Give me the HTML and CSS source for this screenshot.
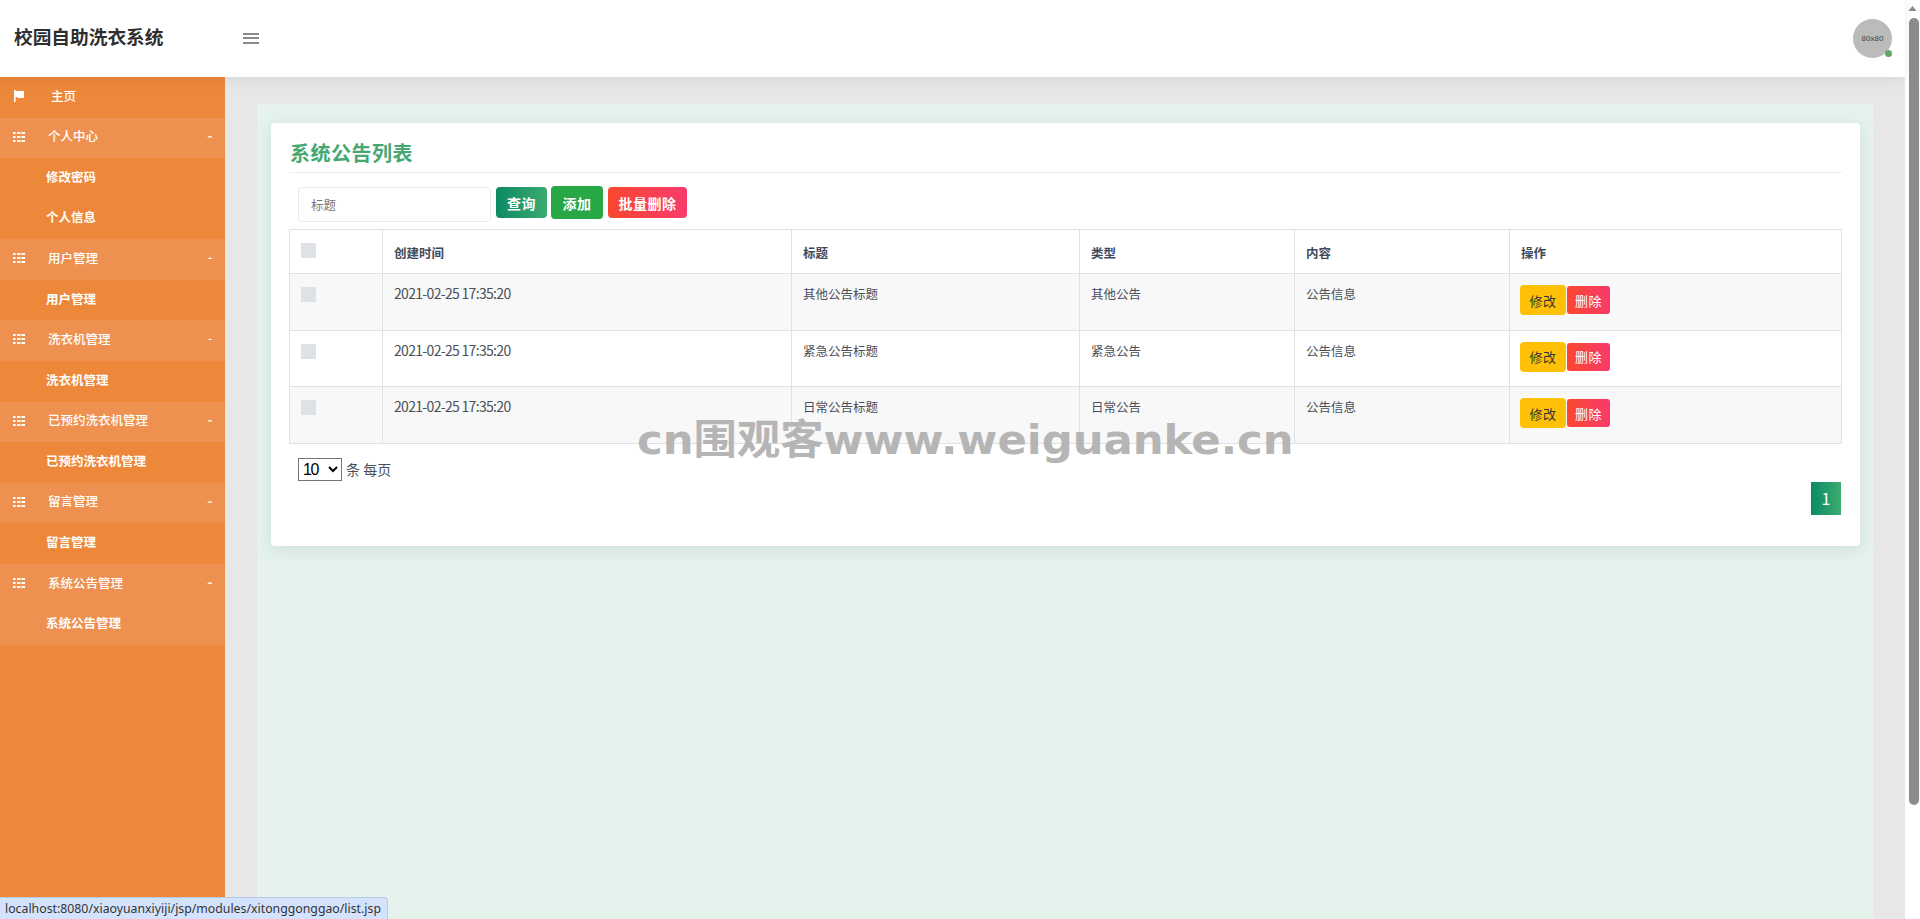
FILE: index.html
```html
<!DOCTYPE html>
<html lang="zh-CN">
<head>
<meta charset="utf-8">
<title>校园自助洗衣系统</title>
<link rel="stylesheet" href="styles.css">
</head>
<body>
<div class="page">
  <header class="topbar">
    <div class="brand">校园自助洗衣系统</div>
    <button class="burger" aria-label="menu"><span></span><span></span><span></span></button>
    <div class="avatar">80x80<i class="dot"></i></div>
  </header>
  <div class="body-row">
    <nav class="sidebar">
      <a class="nav-item home"><svg class="ico" viewBox="0 0 12 12"><path d="M1 0h1.6v1H11v7H4.5V7H2.6v5H1z" fill="#fff"/></svg><span>主页</span></a>
      <a class="nav-item head"><svg class="ico" viewBox="0 0 12 12"><path d="M0 1h2.6v2H0zM4 1h3.5v2H4zM8.5 1H12v2H8.5zM0 5h2.6v2H0zM4 5h3.5v2H4zM8.5 5H12v2H8.5zM0 9h2.6v2H0zM4 9h3.5v2H4zM8.5 9H12v2H8.5z" fill="#fff"/></svg><span>个人中心</span><b class="caret"></b></a>
      <a class="nav-item sub">修改密码</a>
      <a class="nav-item sub">个人信息</a>
      <a class="nav-item head"><svg class="ico" viewBox="0 0 12 12"><path d="M0 1h2.6v2H0zM4 1h3.5v2H4zM8.5 1H12v2H8.5zM0 5h2.6v2H0zM4 5h3.5v2H4zM8.5 5H12v2H8.5zM0 9h2.6v2H0zM4 9h3.5v2H4zM8.5 9H12v2H8.5z" fill="#fff"/></svg><span>用户管理</span><b class="caret"></b></a>
      <a class="nav-item sub">用户管理</a>
      <a class="nav-item head"><svg class="ico" viewBox="0 0 12 12"><path d="M0 1h2.6v2H0zM4 1h3.5v2H4zM8.5 1H12v2H8.5zM0 5h2.6v2H0zM4 5h3.5v2H4zM8.5 5H12v2H8.5zM0 9h2.6v2H0zM4 9h3.5v2H4zM8.5 9H12v2H8.5z" fill="#fff"/></svg><span>洗衣机管理</span><b class="caret"></b></a>
      <a class="nav-item sub">洗衣机管理</a>
      <a class="nav-item head"><svg class="ico" viewBox="0 0 12 12"><path d="M0 1h2.6v2H0zM4 1h3.5v2H4zM8.5 1H12v2H8.5zM0 5h2.6v2H0zM4 5h3.5v2H4zM8.5 5H12v2H8.5zM0 9h2.6v2H0zM4 9h3.5v2H4zM8.5 9H12v2H8.5z" fill="#fff"/></svg><span>已预约洗衣机管理</span><b class="caret"></b></a>
      <a class="nav-item sub">已预约洗衣机管理</a>
      <a class="nav-item head"><svg class="ico" viewBox="0 0 12 12"><path d="M0 1h2.6v2H0zM4 1h3.5v2H4zM8.5 1H12v2H8.5zM0 5h2.6v2H0zM4 5h3.5v2H4zM8.5 5H12v2H8.5zM0 9h2.6v2H0zM4 9h3.5v2H4zM8.5 9H12v2H8.5z" fill="#fff"/></svg><span>留言管理</span><b class="caret"></b></a>
      <a class="nav-item sub">留言管理</a>
      <a class="nav-item head"><svg class="ico" viewBox="0 0 12 12"><path d="M0 1h2.6v2H0zM4 1h3.5v2H4zM8.5 1H12v2H8.5zM0 5h2.6v2H0zM4 5h3.5v2H4zM8.5 5H12v2H8.5zM0 9h2.6v2H0zM4 9h3.5v2H4zM8.5 9H12v2H8.5z" fill="#fff"/></svg><span>系统公告管理</span><b class="caret"></b></a>
      <a class="nav-item sub active">系统公告管理</a>
    </nav>
    <main class="main">
      <div class="panel">
        <section class="card">
          <h2 class="card-title">系统公告列表</h2>
          <div class="toolbar">
            <input class="search" placeholder="标题">
            <button class="btn btn-query">查询</button>
            <button class="btn btn-add">添加</button>
            <button class="btn btn-batch">批量删除</button>
          </div>
          <table class="grid">
            <colgroup><col class="c1"><col class="c2"><col class="c3"><col class="c4"><col class="c5"><col class="c6"></colgroup>
            <thead>
              <tr><th><i class="check"></i></th><th>创建时间</th><th>标题</th><th>类型</th><th>内容</th><th>操作</th></tr>
            </thead>
            <tbody>
              <tr><td><i class="check"></i></td><td class="date">2021-02-25 17:35:20</td><td>其他公告标题</td><td>其他公告</td><td>公告信息</td><td class="ops"><button class="op op-edit">修改</button><button class="op op-del">删除</button></td></tr>
              <tr><td><i class="check"></i></td><td class="date">2021-02-25 17:35:20</td><td>紧急公告标题</td><td>紧急公告</td><td>公告信息</td><td class="ops"><button class="op op-edit">修改</button><button class="op op-del">删除</button></td></tr>
              <tr><td><i class="check"></i></td><td class="date">2021-02-25 17:35:20</td><td>日常公告标题</td><td>日常公告</td><td>公告信息</td><td class="ops"><button class="op op-edit">修改</button><button class="op op-del">删除</button></td></tr>
            </tbody>
          </table>
          <div class="pagesize">
            <select class="size-select"><option>10</option></select>
            <span>条 每页</span>
          </div>
          <div class="pager"><a class="page-no">1</a></div>
        </section>
      </div>
    </main>
  </div>
</div>
<div class="scrollbar">
  <svg class="sb-arrow" viewBox="0 0 10 6"><path d="M5 0l5 6H0z" fill="#8c8c8c"/></svg>
  <div class="sb-thumb"></div>
</div>
<div class="watermark">cn围观客www.weiguanke.cn</div>
<div class="status">localhost:8080/xiaoyuanxiyiji/jsp/modules/xitonggonggao/list.jsp</div>
</body>
</html>
```
FILE: styles.css
```css
* { box-sizing: border-box; }
html, body { margin: 0; height: 919px; overflow: hidden; }
body {
  display: flex;
  position: relative;
  background: #fff;
  font-family: "Noto Sans CJK SC", "Noto Sans", sans-serif;
  color: #495057;
}
.page { width: 1905px; height: 919px; display: flex; flex-direction: column; }
.topbar {
  height: 77px; flex: none; display: flex; align-items: center;
  background: #fff; padding: 0 13px 0 14px; position: relative; z-index: 2;
  box-shadow: 0 2px 12px rgba(0,0,0,.08);
}
.brand { font-size: 18.7px; font-weight: 700; color: #2f2f2f; width: 229px; line-height: 1; margin-top: -4px; }
.burger { width: 16px; height: 11px; padding: 0; border: 0; background: none; display: flex; flex-direction: column; justify-content: space-between; margin-top: -1px; }
.burger span { display: block; height: 2px; background: #8a8a8a; }
.avatar {
  margin-left: auto; width: 39px; height: 39px; border-radius: 50%; background: #bbb; position: relative;
  display: flex; align-items: center; justify-content: center; font-size: 8px; color: #444; font-family: "Liberation Sans", sans-serif;
}
.dot { position: absolute; right: 0; bottom: 1px; width: 7px; height: 7px; border-radius: 50%; background: #62a862; }
.body-row { flex: 1; display: flex; min-height: 0; }
.sidebar { width: 225px; flex: none; background: #ed873a; display: flex; flex-direction: column; }
.nav-item { height: 40.57px; flex: none; display: flex; align-items: center; color: #fff; font-size: 12.5px; font-weight: 500; position: relative; padding-bottom: 4px; }
.ico { width: 12px; height: 12px; position: absolute; left: 13px; top: 13px; }
.home { padding-left: 51px; }
.head { background: #ee9150; padding-left: 48px; }
.sub { padding-left: 46px; font-weight: 700; }
.active { background: #ee9150; }
.caret { position: absolute; right: 12px; top: 18px; width: 6px; height: 2px; background: #fff; clip-path: polygon(50% 0, 100% 100%, 0 100%); }
.main { flex: 1; background: #e7e7e7; padding: 27px 32px 0; min-width: 0; }
.panel { height: 100%; background: #e5f3ec; padding: 19px 13px 0 14px; }
.card {
  height: 423px; background: #fff; border-radius: 4px; padding: 18px 18px 0; display: block;
  box-shadow: 0 4px 16px rgba(120,140,170,.2);
}
.card-title { margin: 0; height: 32px; font-size: 20px; font-weight: 700; letter-spacing: .5px; line-height: 24px; color: #45a872; border-bottom: 1px solid #eee; padding-left: 1px; }
.toolbar { display: flex; align-items: flex-start; height: 34px; margin: 14px 0 8px; padding-left: 9px; }
.search { width: 193px; height: 35px; border: 1px solid #e9ecef; border-radius: 4px; padding: 0 12px; font: 12.5px "Noto Sans CJK SC", sans-serif; margin-right: 5px; }
.search::placeholder { color: #777; }
.btn { border: 0; color: #fff; font: 700 14px "Noto Sans CJK SC", sans-serif; letter-spacing: .5px; border-radius: 4px; height: 31px; padding: 0; }
.btn-query { width: 51px; background: linear-gradient(90deg, #0b8a63, #3cab70); margin-right: 4px; }
.btn-add { width: 52px; height: 33px; margin-top: -1px; background: #28a745; margin-right: 5px; }
.btn-batch { width: 79px; background: linear-gradient(90deg, #f8482f, #f83a6c); }
.grid { width: 1552px; border-collapse: collapse; table-layout: fixed; font-size: 13px; }
.c1 { width: 93px; } .c2 { width: 409px; } .c3 { width: 288px; } .c4 { width: 215px; } .c5 { width: 215px; } .c6 { width: 332px; }
.grid th, .grid td { border: 1px solid #dee2e6; padding: 12px 11px; vertical-align: top; text-align: left; line-height: 18px; }
.grid th { height: 44px; font-size: 12.5px; font-weight: 700; color: #3f4b5c; padding-top: 14px; padding-bottom: 10px; }
.grid td { height: 56.5px; font-size: 12.5px; color: #495057; padding-top: 11px; padding-bottom: 9px; }
.grid td.date { font-size: 14px; letter-spacing: -.68px; padding-top: 10px; }
.grid th:first-child, .grid td:first-child { padding: 0 0 0 11px; }
.grid tbody tr:nth-child(odd) { background: #f8f8f8; }
.check { display: block; width: 15px; height: 15px; background: #dee2e6; margin-top: 13px; }
.grid td.ops { padding: 11px 0 0 10px; }
.op { vertical-align: middle; border: 0; padding: 0; font: 13px "Noto Sans CJK SC", sans-serif; letter-spacing: .6px; border-radius: 3px; }
.op-edit { width: 46px; height: 30px; background: #ffc107; color: #333; border-radius: 4px; margin-right: 1px; }
.op-del { width: 43px; height: 28px; background: linear-gradient(90deg, #f8482f, #f83a6c); color: #fff; }
.pagesize { display: flex; align-items: center; margin: 14px 0 0 9px; height: 23px; font-size: 14px; }
.size-select { width: 44px; height: 23px; font: 16px "Liberation Sans", sans-serif; letter-spacing: -1.5px; padding: 0; margin-right: 4px; background: #fff; color: #000; border: 1px solid #767676; border-radius: 0; }
.pager { display: flex; justify-content: flex-end; width: 1552px; margin-top: 1px; }
.page-no { width: 30px; height: 33px; display: flex; align-items: center; justify-content: center; color: #fff; font-size: 16px; background: linear-gradient(90deg, #0b8a63, #3cab70); }
.scrollbar { width: 15px; height: 919px; background: #fff; position: relative; display: flex; flex-direction: column; align-items: center; }
.sb-arrow { width: 9px; height: 5px; margin-top: 6px; }
.sb-thumb { width: 10px; height: 787px; background: #8c8c8c; border-radius: 5px; margin-top: 7px; margin-left: 2px; }
.watermark {
  position: absolute; left: 637px; top: 414px; white-space: nowrap; transform: scaleX(1.057); transform-origin: left center;
  font: 700 41px/52px "DejaVu Sans", "Noto Sans CJK SC", sans-serif; color: #b5b5b5; z-index: 5;
}
.status {
  position: absolute; left: 0; bottom: 0; width: 388px; height: 22px; padding: 0 0 0 5px;
  background: #d3e3fd; border: 1px solid #bccbe4; border-left: 0; border-bottom: 0; border-top-right-radius: 4px;
  font: 12.3px/21px "Noto Sans", sans-serif; color: #333; white-space: nowrap; z-index: 6;
}
```
